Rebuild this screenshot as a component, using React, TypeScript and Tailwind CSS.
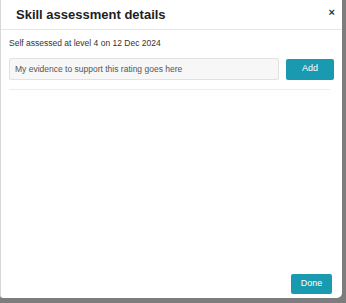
export default function App() {
  return (
    <div className="w-[346px] h-[303px] bg-[#7d7d7d] overflow-hidden" style={{ fontFamily: '"Liberation Sans", Arial, sans-serif' }}>
      <div className="w-[342px] h-[298px] bg-white border-l border-[#d6d6d6] rounded-br-[5px] rounded-bl-[3px] flex flex-col">
        <div className="h-[30px] border-b border-[#e6e6e6] flex items-center justify-between pl-[15px] pr-[7px]">
          <div className="text-[13px] font-bold text-[#1e1e1e]">Skill assessment details</div>
          <div className="text-[11px] font-bold text-[#333] leading-none -mt-[4px]">×</div>
        </div>
        <div className="px-[8px]">
          <div className="pt-[7px] text-[8.5px] leading-[12px] text-[#333]">Self assessed at level 4 on 12 Dec 2024</div>
          <div className="flex items-center gap-[7px] mt-[9px]">
            <div className="w-[270px] h-[22px] bg-[#f7f7f7] border border-[#e2e2e2] rounded-[2px] flex items-center pl-[5px] text-[8.5px] text-[#555]">
              My evidence to support this rating goes here
            </div>
            <button className="w-[48px] h-[21px] bg-[#1a9ab1] rounded-[2px] text-white text-[9px]">Add</button>
          </div>
          <div className="mt-[9px] border-t border-[#ececec] mr-[4px]"></div>
        </div>
        <div className="mt-auto flex justify-end pr-[10px] pb-[4px]">
          <button className="w-[41px] h-[20px] bg-[#1a9ab1] rounded-[2px] text-white text-[9px]">Done</button>
        </div>
      </div>
    </div>
  );
}
